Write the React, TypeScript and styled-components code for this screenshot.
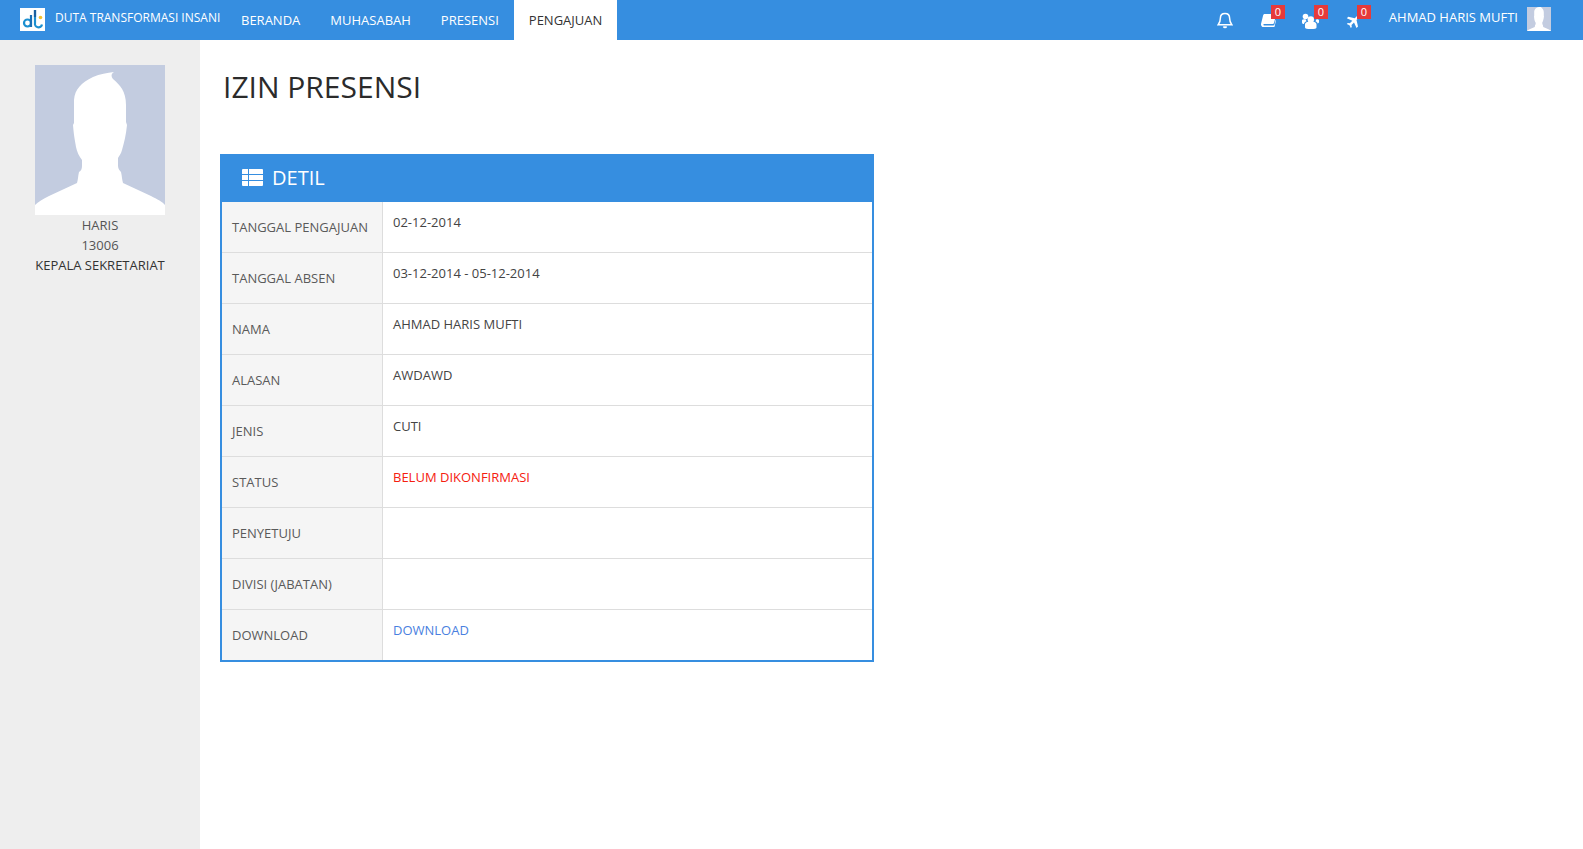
import { FC } from "react";
import styled, { createGlobalStyle } from "styled-components";

const GlobalStyle = createGlobalStyle`
	html, body {
		margin: 0;
		padding: 0;
		background: #fff;
	}
	body {
		font-family: "Open Sans", sans-serif;
		font-size: 13px;
		color: #333;
	}
	* {
		box-sizing: border-box;
	}
`;

const Page = styled.div`
	width: 100%;
	height: 849px;
	display: flex;
	flex-direction: column;
	overflow: hidden;
`;

const Navbar = styled.header`
	height: 40px;
	flex: none;
	display: flex;
	align-items: stretch;
	background: #368ee0;
	color: #fff;
	padding: 0 32px 0 20px;
`;

const Brand = styled.div`
	display: flex;
	align-items: center;
	gap: 10px;
	width: 206px;
	flex: none;
	font-size: 12px;
	white-space: nowrap;
	padding-bottom: 1px;
	span {
		position: relative;
		top: -2px;
	}
`;

const LogoBox = styled.svg`
	width: 25px;
	height: 23px;
	display: block;
	flex: none;
`;

const NavList = styled.nav`
	display: flex;
	align-items: stretch;
`;

const NavItem = styled.a<{ $active?: boolean }>`
	display: flex;
	align-items: center;
	padding: 0 15px;
	background: ${(p) => (p.$active ? "#fff" : "transparent")};
	color: ${(p) => (p.$active ? "#333" : "#fff")};
`;

const NavRight = styled.div`
	margin-left: auto;
	display: flex;
	align-items: center;
`;

const IconLink = styled.div<{ $pad?: number }>`
	position: relative;
	width: 43px;
	height: 40px;
	display: flex;
	align-items: center;
	justify-content: center;
	padding: 1px ${(p) => p.$pad ?? 10}px 0 0;
`;

const Badge = styled.span`
	position: absolute;
	top: 5px;
	right: 9px;
	width: 14px;
	height: 14px;
	background: #e63a3a;
	color: #fff;
	font-size: 11px;
	line-height: 14px;
	text-align: center;
`;

const UserName = styled.span`
	margin-left: 9px;
	padding-bottom: 6px;
`;

const UserThumb = styled.svg`
	width: 24px;
	height: 24px;
	margin-left: 9px;
	margin-bottom: 3px;
	display: block;
`;

const Body = styled.div`
	flex: 1;
	display: flex;
	min-height: 0;
`;

const Sidebar = styled.aside`
	width: 200px;
	flex: none;
	background: #eee;
	padding-top: 25px;
	display: flex;
	flex-direction: column;
	align-items: center;
`;

const Avatar = styled.svg`
	width: 130px;
	height: 150px;
	display: block;
`;

const ProfileLine = styled.div<{ $strong?: boolean }>`
	line-height: 20px;
	font-size: 13px;
	color: ${(p) => (p.$strong ? "#333" : "#555")};
`;

const Content = styled.main`
	flex: 1;
	padding: 26px 20px 0 20px;
`;

const Title = styled.h1`
	margin: 0 0 46px 3px;
	font-size: 30px;
	line-height: 42px;
	font-weight: 400;
	color: #2b2b2b;
`;

const Panel = styled.section`
	width: 654px;
	border: 2px solid #368ee0;
`;

const PanelHead = styled.div`
	height: 46px;
	background: #368ee0;
	color: #fff;
	display: flex;
	align-items: center;
	gap: 9px;
	padding: 0 0 4px 20px;
	font-size: 20px;
`;

const Row = styled.div`
	display: grid;
	grid-template-columns: 161px 1fr;
	height: 51px;
	border-bottom: 1px solid #ddd;
	&:last-child {
		border-bottom: 0;
		height: 50px;
	}
`;

const Label = styled.div`
	background: #f5f5f5;
	border-right: 1px solid #ddd;
	padding: 15px 0 0 10px;
	color: #5a5a5a;
	line-height: 20px;
`;

const Value = styled.div<{ $tone?: string }>`
	padding: 10px 0 0 10px;
	line-height: 20px;
	color: ${(p) => p.$tone ?? "#444"};
`;

const rows: { label: string; value?: string; tone?: string }[] = [
	{ label: "TANGGAL PENGAJUAN", value: "02-12-2014" },
	{ label: "TANGGAL ABSEN", value: "03-12-2014 - 05-12-2014" },
	{ label: "NAMA", value: "AHMAD HARIS MUFTI" },
	{ label: "ALASAN", value: "AWDAWD" },
	{ label: "JENIS", value: "CUTI" },
	{ label: "STATUS", value: "BELUM DIKONFIRMASI", tone: "#f5200f" },
	{ label: "PENYETUJU" },
	{ label: "DIVISI (JABATAN)" },
	{ label: "DOWNLOAD", value: "DOWNLOAD", tone: "#4a7fe0" },
];

const Silhouette: FC = () => (
	<>
		<rect width="130" height="150" fill="#c3cce0" />
		<path
			d="M0 150V140C3 137 8 134 14 131L42 118C43 115 43 111 44 107C46 106 47 104 47 101C47 99 47 97 47 95C44 91 42 87 41 82C40 76 39 72 38 60L39 58V35C40 24 46 18 58 12C65 9 72 8 79 7C76 9 76 11 78 14C85 20 91 26 91 40V57L92 60C91 70 89 78 87 85C86 89 84 91 83 93C83 96 83 99 83 101C83 104 85 106 86 107C87 111 87 115 88 118L116 131C122 134 128 137 130 140V150Z"
			fill="#fff"
		/>
	</>
);

const App: FC = () => (
	<>
		<GlobalStyle />
		<Page>
			<Navbar>
				<Brand>
					<LogoBox viewBox="0 0 25 23">
						<rect width="25" height="23" fill="#fff" />
						<circle cx="7.500" cy="15" r="3.500" stroke="#1b8fd0" strokeWidth="2.200" fill="none" />
						<path d="M11 7V19" stroke="#1a6fb5" strokeWidth="2.200" fill="none" />
						<path d="M15 2V15a3.500 3.500 0 0 0 7 1.500" stroke="#1b8fd0" strokeWidth="2.200" fill="none" />
						<path d="M15 2V9" stroke="#1a5f9f" strokeWidth="2.200" fill="none" />
						<circle cx="20.500" cy="9.500" r="1.800" fill="#f2c230" />
					</LogoBox>
					<span>DUTA TRANSFORMASI INSANI</span>
				</Brand>
				<NavList>
					<NavItem>BERANDA</NavItem>
					<NavItem>MUHASABAH</NavItem>
					<NavItem>PRESENSI</NavItem>
					<NavItem $active>PENGAJUAN</NavItem>
				</NavList>
				<NavRight>
					<IconLink $pad={8}>
						<svg width="16" height="17" viewBox="0 0 16 17" fill="none" stroke="#fff" strokeWidth="1.500">
							<path d="M8 1.500c-3 0-4.600 2-4.600 4.600 0 3.400-.8 5-2.200 6.600h13.600c-1.400-1.600-2.200-3.200-2.200-6.600C12.600 3.500 11 1.500 8 1.500Z" />
							<path d="M6.500 14.500a1.600 1.600 0 0 0 3 0" fill="#fff" />
						</svg>
					</IconLink>
					<IconLink $pad={8}>
						<svg width="15" height="13" viewBox="0 0 15 13" fill="#fff">
							<path d="M3.800 0h10.700c.5 0 .6.500.5 1L13 9c-.2.700-.6 1-1.300 1H3.200c-1.200 0-1.200 1.400 0 1.400h9.300c.5 0 .8-.3 1-.8l1-4.600.5.500-1.500 6.300c-.2.500-.6.700-1.200.7H2.500C.8 13-.4 11.500.1 9.500L2.100 1.500C2.300.5 2.900 0 3.800 0Z" />
						</svg>
						<Badge>0</Badge>
					</IconLink>
					<IconLink>
						<svg width="17" height="16" viewBox="0 0 17 16" fill="#fff">
							<circle cx="8.800" cy="6.500" r="3.200" />
							<circle cx="3.500" cy="3.500" r="2.800" />
							<circle cx="14.500" cy="4" r="2" />
							<path d="M3 11.500c0-2 2-3 5.800-3s5.700 1 5.700 3v3c0 1-2 1.500-5.700 1.500S3 15.500 3 14.500ZM0 7.500c0-1 1.500-1.200 3.500-1.200l1 2C2.800 9 2.200 9.800 2 11 1 11 0 10.500 0 9.500ZM17 7.500c0-1-1-1.200-2.500-1.200l-1 2c1.300.6 2 1.300 2 2.300.9-.2 1.500-.6 1.500-1.500Z" />
						</svg>
						<Badge>0</Badge>
					</IconLink>
					<IconLink>
						<svg width="14" height="14" viewBox="0 0 14 14" fill="#fff">
							<path d="M13.500.5c.8.800.2 2.200-.8 3.200L10.500 6l1.500 6.500-1.500 1.500-2.500-5.500-2.500 2.500.3 2-1 1-1.300-2.700L.8 10l1-1 2 .3L6.300 6.800.8 4.300 2.300 2.800 8.800 4.300l2.200-2.200c1-1 2-2.200 2.500-1.600Z" />
						</svg>
						<Badge>0</Badge>
					</IconLink>
					<UserName>AHMAD HARIS MUFTI</UserName>
					<UserThumb viewBox="0 0 130 150" preserveAspectRatio="xMidYMid slice">
						<Silhouette />
					</UserThumb>
				</NavRight>
			</Navbar>
			<Body>
				<Sidebar>
					<Avatar viewBox="0 0 130 150">
						<Silhouette />
					</Avatar>
					<ProfileLine>HARIS</ProfileLine>
					<ProfileLine>13006</ProfileLine>
					<ProfileLine $strong>KEPALA SEKRETARIAT</ProfileLine>
				</Sidebar>
				<Content>
					<Title>IZIN PRESENSI</Title>
					<Panel>
						<PanelHead>
							<svg width="21" height="17" viewBox="0 0 21 17" fill="#fff">
								<path d="M0 1a1 1 0 0 1 1-1h5v5H0ZM7 0h13a1 1 0 0 1 1 1v4H7ZM0 6h6v5H0ZM7 6h14v5H7ZM0 12h6v5H1a1 1 0 0 1-1-1ZM7 12h14v4a1 1 0 0 1-1 1H7Z" />
							</svg>
							DETIL
						</PanelHead>
						{rows.map((r) => (
							<Row key={r.label}>
								<Label>{r.label}</Label>
								<Value $tone={r.tone}>{r.value}</Value>
							</Row>
						))}
					</Panel>
				</Content>
			</Body>
		</Page>
	</>
);

export default App;
